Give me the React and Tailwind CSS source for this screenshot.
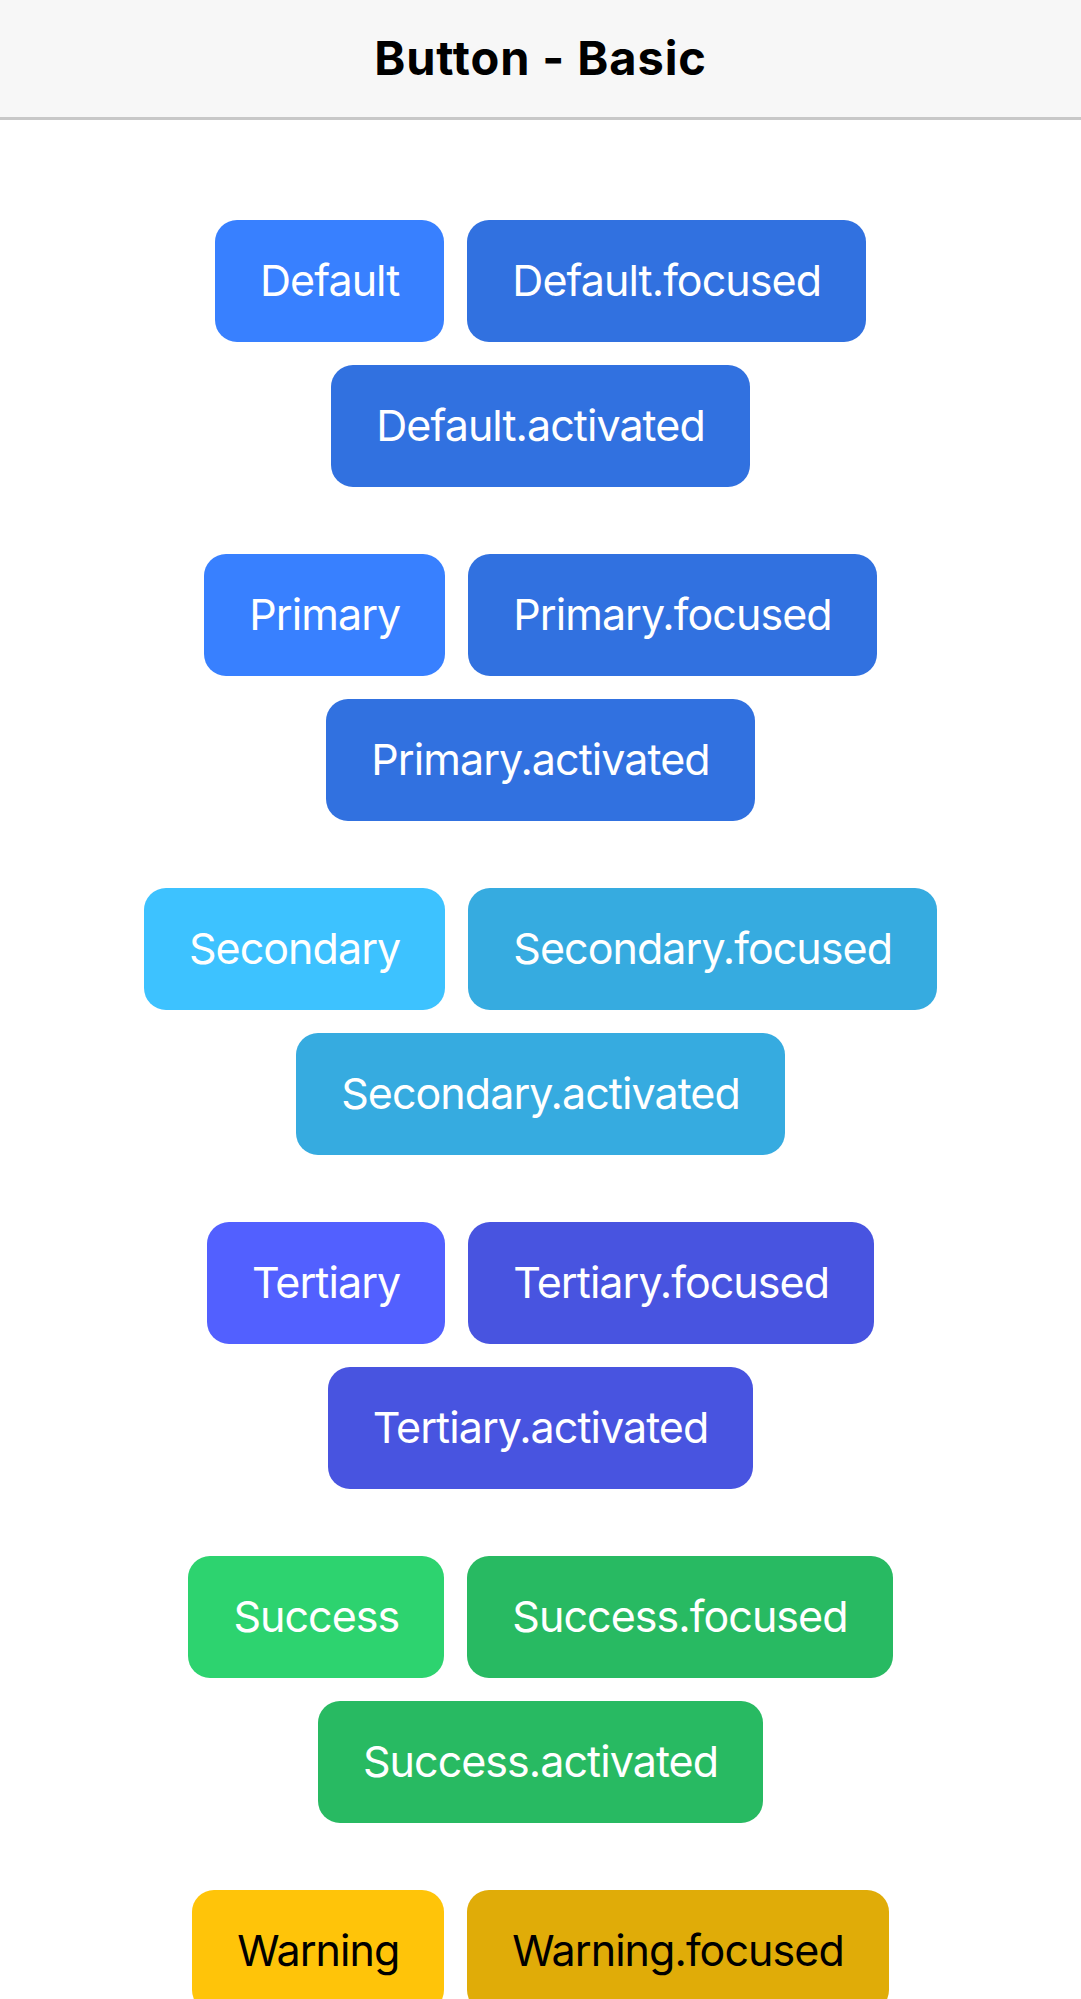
const GROUPS = [
  { name: 'Default', base: 'bg-[#3880ff]', shade: 'bg-[#3171e0]', text: 'text-white' },
  { name: 'Primary', base: 'bg-[#3880ff]', shade: 'bg-[#3171e0]', text: 'text-white' },
  { name: 'Secondary', base: 'bg-[#3dc2ff]', shade: 'bg-[#36abe0]', text: 'text-white' },
  { name: 'Tertiary', base: 'bg-[#5260ff]', shade: 'bg-[#4854e0]', text: 'text-white' },
  { name: 'Success', base: 'bg-[#2dd36f]', shade: 'bg-[#28ba62]', text: 'text-white' },
  { name: 'Warning', base: 'bg-[#ffc409]', shade: 'bg-[#e0ac08]', text: 'text-black' },
]

function Btn({ label, bg, text }) {
  return (
    <button
      type="button"
      className={`h-[122px] px-[45px] pb-[2px] rounded-[22px] text-[43px] font-normal tracking-[-0.95px] ${bg} ${text}`}
    >
      {label}
    </button>
  )
}

export default function App() {
  return (
    <div className="min-h-screen bg-white" style={{ fontFamily: 'Inter, "Noto Sans", sans-serif' }}>
      {/* Toolbar */}
      <header className="h-[120px] flex items-center justify-center bg-[#f7f7f7] border-b-[3px] border-[#c8c8c8]">
        <h1 className="text-[47px] font-bold text-black tracking-[0.9px]">Button - Basic</h1>
      </header>

      <main className="pt-[100px] px-4 flex flex-col gap-[67px]">
        {GROUPS.map(g => (
          <div key={g.name} className="flex flex-wrap justify-center gap-[23px]">
            <Btn label={g.name} bg={g.base} text={g.text} />
            <Btn label={`${g.name}.focused`} bg={g.shade} text={g.text} />
            <Btn label={`${g.name}.activated`} bg={g.shade} text={g.text} />
          </div>
        ))}
      </main>
    </div>
  )
}
